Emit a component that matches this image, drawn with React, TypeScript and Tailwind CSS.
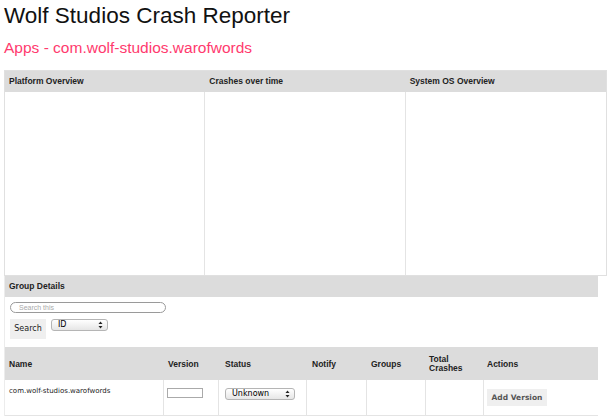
const cell = "border-r border-[#e4e4e4] last:border-r-0";

const Select = ({ label, w }: { label: string; w: string }) => (
  <div
    className={`flex items-center justify-between h-[12px] rounded-[3px] border border-[#b5b5b5] bg-gradient-to-b from-white to-[#e6e6e6] pl-[6px] pr-[4px] text-[8px] leading-[10px] text-black ${w}`}
  >
    <span>{label}</span>
    <svg width="5" height="8" viewBox="0 0 5 8">
      <path d="M2.5 0.5 L4.5 3 L0.5 3 Z" fill="#222" />
      <path d="M2.5 7.5 L4.5 5 L0.5 5 Z" fill="#222" />
    </svg>
  </div>
);

export default function App() {
  return (
    <main className="w-[610px] h-[418px] overflow-hidden bg-white font-['DejaVu_Sans',sans-serif]">
      <h1 className="pl-[4px] pt-[2px] h-[35px] text-[22.5px] leading-[28px] text-[#111] font-['Liberation_Sans',sans-serif]">
        Wolf Studios Crash Reporter
      </h1>
      <h2 className="pl-[4px] h-[35px] text-[15.5px] leading-[26px] text-[#ff3a6e] font-['Liberation_Sans',sans-serif]">
        Apps - com.wolf-studios.warofwords
      </h2>

      <section className="ml-[4px] w-[603px] border border-[#e0e0e0]">
        <div className="grid grid-cols-3 h-[21px] bg-[#dcdcdc] text-[8.5px] font-bold text-[#222] font-['Liberation_Sans',sans-serif]">
          <div className="pl-[4px] flex items-center">Platform Overview</div>
          <div className="pl-[4px] flex items-center">Crashes over time</div>
          <div className="pl-[4px] flex items-center">System OS Overview</div>
        </div>
        <div className="grid grid-cols-3 h-[183px]">
          <div className={cell} />
          <div className={cell} />
          <div className={cell} />
        </div>
      </section>

      <section className="ml-[4px] w-[594px] border-l border-[#ececec]">
        <div className="h-[21px] bg-[#dcdcdc] pl-[4px] flex items-center text-[8.5px] font-bold text-[#222] font-['Liberation_Sans',sans-serif]">
          Group Details
        </div>
        <div className="h-[50px] pl-[5px] pt-[5px]">
          <div className="w-[156px] h-[11px] rounded-full border border-[#9a9a9a] pl-[8px] text-[7px] leading-[9px] text-[#aaa] font-['Liberation_Sans',sans-serif]">
            Search this
          </div>
          <div className="flex items-start gap-[5px] mt-[6px]">
            <div className="w-[36px] h-[20px] bg-[#efefef] flex items-center justify-center text-[8px] text-[#222]">
              Search
            </div>
            <Select label="ID" w="w-[57px]" />
          </div>
        </div>

        <div className="grid grid-cols-[159px_55px_88px_60px_59px_58px_1fr] h-[33px] bg-[#dcdcdc] text-[8.5px] font-bold text-[#222] items-center font-['Liberation_Sans',sans-serif]">
          <div className="pl-[4px] pt-[2px]">Name</div>
          <div className="pl-[4px] pt-[2px]">Version</div>
          <div className="pl-[6px] pt-[2px]">Status</div>
          <div className="pl-[5px] pt-[2px]">Notify</div>
          <div className="pl-[4px] pt-[2px]">Groups</div>
          <div className="pl-[3px] leading-[9px]">
            Total
            <br />
            Crashes
          </div>
          <div className="pl-[3px] pt-[2px]">Actions</div>
        </div>
        <div className="grid grid-cols-[159px_55px_88px_60px_59px_58px_1fr] h-[36px] border-b border-[#e4e4e4] text-[7px] text-[#222]">
          <div className={`${cell} pl-[4px] pt-[6px]`}>com.wolf-studios.warofwords</div>
          <div className={`${cell} pl-[3px] pt-[8px]`}>
            <div className="w-[36px] h-[10px] border border-[#aaa] bg-white" />
          </div>
          <div className={`${cell} pl-[6px] pt-[8px]`}>
            <Select label="Unknown" w="w-[70px]" />
          </div>
          <div className={cell} />
          <div className={cell} />
          <div className={cell} />
          <div className="pl-[3px] pt-[9px]">
            <div className="w-[60px] h-[17px] bg-[#efefef] flex items-center justify-center text-[7.5px] font-bold text-[#555]">
              Add Version
            </div>
          </div>
        </div>
      </section>
    </main>
  );
}
